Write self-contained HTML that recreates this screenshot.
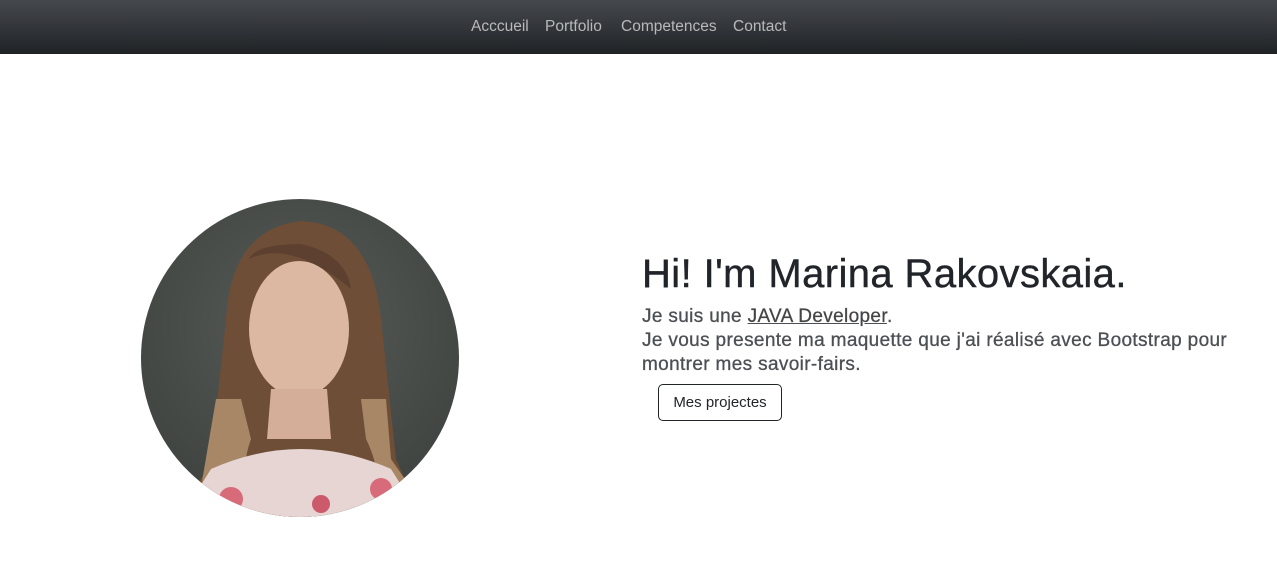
<!DOCTYPE html>
<html><head><meta charset="utf-8"><style>
body{margin:0;width:1277px;height:566px;background:#fff;font-family:"Liberation Sans",sans-serif;overflow:hidden;position:relative}
.nav{position:absolute;left:0;top:0;width:1277px;height:54px;background:linear-gradient(#45484d,#202326);}
.nav a{position:absolute;top:18px;color:#b8b9bb;font-size:15.5px;text-decoration:none}
.photo{position:absolute;left:141px;top:199px;width:318px;height:318px;border-radius:50%;overflow:hidden;background:radial-gradient(circle at 50% 40%,#575c59,#454946 60%,#3a3d3b)}
h1{position:absolute;left:642px;top:252px;margin:0;font-weight:normal;font-size:40px;color:#212529;letter-spacing:0.4px;-webkit-text-stroke:0.4px #212529}
p{position:absolute;left:642px;top:305px;margin:0;font-size:19px;line-height:24px;color:#4c4f53;letter-spacing:0.35px;-webkit-text-stroke:0.3px #4c4f53}
p u{color:#444}
.btn{position:absolute;left:658px;top:384px;border:1px solid #212529;border-radius:5px;box-sizing:border-box;font-size:15px;color:#212529;text-align:center;line-height:35px;width:124px;height:37px}
</style></head><body>
<div class="nav">
<a style="left:471px">Acccueil</a><a style="left:545px">Portfolio</a><a style="left:621px">Competences</a><a style="left:733px">Contact</a>
</div>
<div class="photo">
<svg width="318" height="318" viewBox="0 0 318 318">
<path d="M85 120 Q90 30 160 22 Q230 25 240 120 L255 260 L280 318 L40 318 L70 260 Z" fill="#6e4e36"/>
<path d="M75 200 L100 200 L110 240 Q95 280 120 318 L55 318 Z" fill="#a78766"/>
<path d="M220 200 L245 200 L250 260 L290 318 L230 318 Q245 280 225 240Z" fill="#a78766"/>
<ellipse cx="158" cy="130" rx="50" ry="68" fill="#dcb8a2"/>
<path d="M130 190 L186 190 L190 240 L126 240 Z" fill="#d4ae98"/>
<path d="M70 270 Q160 230 250 270 L280 318 L40 318 Z" fill="#e6d5d3"/>
<circle cx="90" cy="300" r="12" fill="#d86b7a"/><circle cx="240" cy="290" r="11" fill="#d86b7a"/><circle cx="180" cy="305" r="9" fill="#cc5a6a"/>
<path d="M108 60 Q150 40 210 90 Q205 55 160 45 Q115 45 108 60Z" fill="#5e4030"/>
</svg>
</div>
<h1>Hi! I'm Marina Rakovskaia.</h1>
<p>Je suis une <u>JAVA Developer</u>.<br>Je vous presente ma maquette que j'ai réalisé avec Bootstrap pour<br>montrer mes savoir-fairs.</p>
<div class="btn">Mes projectes</div>
</body></html>
